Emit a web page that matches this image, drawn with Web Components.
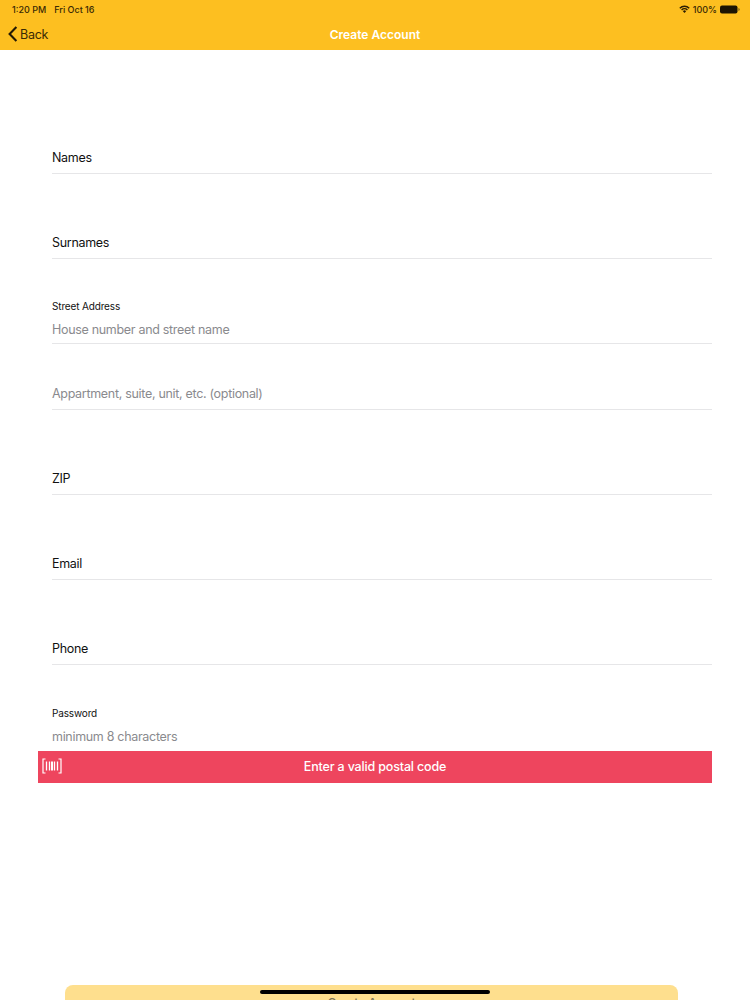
<!DOCTYPE html>
<html>
<head>
<meta charset="utf-8">
<title>Create Account</title>
<style>
  html, body { margin: 0; padding: 0; background: #fff; }
</style>
</head>
<body>
<app-screen>
  <nav-bar slot="top" heading="Create Account"></nav-bar>
  <form-field>Names</form-field>
  <form-field>Surnames</form-field>
  <form-field label="Street Address" hint>House number and street name</form-field>
  <form-field short hint>Appartment, suite, unit, etc. (optional)</form-field>
  <form-field>ZIP</form-field>
  <form-field>Email</form-field>
  <form-field>Phone</form-field>
  <form-field label="Password" hint noline>minimum 8 characters</form-field>
  <toast-bar slot="over">Enter a valid postal code</toast-bar>
  <submit-button slot="over">Create Account</submit-button>
  <home-bar slot="over"></home-bar>
</app-screen>

<script>
function makeTemplate(html) {
  const template = document.createElement('template');
  template.innerHTML = html;
  return template;
}

class AppScreen extends HTMLElement {
  constructor() {
    super();
    this.attachShadow({ mode: 'open' });
    this.shadowRoot.appendChild(AppScreen.template.content.cloneNode(true));
  }
}
AppScreen.template = makeTemplate(`
  <style>
    :host {
      display: flex;
      flex-direction: column;
      position: relative;
      width: 750px;
      height: 1000px;
      overflow: hidden;
      background: #fff;
      font-family: Inter, "Liberation Sans", sans-serif;
    }
    .form {
      display: flex;
      flex-direction: column;
      padding: 39px 38px 0 52px;
    }
  </style>
  <slot name="top"></slot>
  <div class="form"><slot></slot></div>
  <slot name="over"></slot>
`);

class NavBar extends HTMLElement {
  constructor() {
    super();
    this.attachShadow({ mode: 'open' });
    this.shadowRoot.appendChild(NavBar.template.content.cloneNode(true));
    this.shadowRoot.querySelector('.title').textContent = this.getAttribute('heading');
  }
}
NavBar.template = makeTemplate(`
  <style>
    :host {
      display: block;
      height: 50px;
      background: #fdbf20;
      color: #3a2a05;
    }
    .status {
      display: flex;
      justify-content: space-between;
      align-items: center;
      height: 18px;
      padding: 0 10px 0 12px;
      font-size: 9px;
      font-weight: 500;
    }
    .status .left { display: flex; gap: 8px; }
    .status .right { display: flex; align-items: center; gap: 3px; }
    .nav {
      display: grid;
      grid-template-columns: 1fr auto 1fr;
      align-items: center;
      height: 32px;
    }
    .back {
      display: flex;
      align-items: center;
      gap: 2px;
      padding-left: 8px;
      font-size: 12.5px;
      letter-spacing: -0.25px;
    }
    .title {
      color: #fff;
      font-size: 12px;
      font-weight: 600;
    }
  </style>
  <div class="status">
    <div class="left"><span>1:20 PM</span><span>Fri Oct 16</span></div>
    <div class="right">
      <svg width="11" height="8" viewBox="0 0 11 8">
        <path d="M0.3 2.7A7.4 7.4 0 0 1 10.7 2.7L9.7 3.8A6 6 0 0 0 1.3 3.8Z" fill="#2a1e04"/>
        <path d="M2.1 4.5A4.8 4.8 0 0 1 8.9 4.5L7.9 5.5A3.4 3.4 0 0 0 3.1 5.5Z" fill="#2a1e04"/>
        <path d="M3.9 6.2A2.2 2.2 0 0 1 7.1 6.2L5.5 7.9Z" fill="#2a1e04"/>
      </svg>
      <span>100%</span>
      <svg width="20" height="9" viewBox="0 0 20 9">
        <rect x="0" y="0.5" width="17.5" height="8" rx="2" fill="#1c1403"/>
        <path d="M18.5 3V6A1.6 1.6 0 0 0 18.5 3Z" fill="#6b5010"/>
      </svg>
    </div>
  </div>
  <div class="nav">
    <div class="back">
      <svg width="10" height="16" viewBox="0 0 10 16">
        <path d="M8.4 1L1.6 8L8.4 15" fill="none" stroke="#241a04" stroke-width="2.1"/>
      </svg>
      <span>Back</span>
    </div>
    <div class="title"></div>
    <div></div>
  </div>
`);

class FormField extends HTMLElement {
  constructor() {
    super();
    this.attachShadow({ mode: 'open' });
    this.shadowRoot.appendChild(FormField.template.content.cloneNode(true));
    const label = this.shadowRoot.querySelector('.label');
    if (this.hasAttribute('label')) {
      label.textContent = this.getAttribute('label');
    } else {
      label.remove();
    }
  }
}
FormField.template = makeTemplate(`
  <style>
    :host {
      display: flex;
      flex-direction: column;
      justify-content: flex-end;
      box-sizing: border-box;
      height: 85px;
      padding-bottom: 7px;
      border-bottom: 1px solid #e6e6e8;
      color: #111;
      font-size: 12.5px;
      letter-spacing: -0.31px;
      line-height: 17px;
    }
    :host([short]) { height: 66px; }
    :host([hint]) { color: #8a8a8e; }
    :host([label]) { padding-bottom: 5px; }
    :host([noline]) { padding-bottom: 4px; border-bottom-color: transparent; }
    .label {
      color: #111;
      font-size: 10px;
      letter-spacing: -0.15px;
      line-height: 14px;
      margin-bottom: 8px;
    }
  </style>
  <div class="label"></div>
  <div><slot></slot></div>
`);

class ToastBar extends HTMLElement {
  constructor() {
    super();
    this.attachShadow({ mode: 'open' });
    this.shadowRoot.appendChild(ToastBar.template.content.cloneNode(true));
  }
}
ToastBar.template = makeTemplate(`
  <style>
    :host {
      display: flex;
      align-items: center;
      justify-content: center;
      position: absolute;
      left: 38px;
      top: 751px;
      width: 674px;
      height: 32px;
      padding-bottom: 1px;
      box-sizing: border-box;
      background: #ee455e;
      color: #fff;
      font-size: 12.5px;
      font-weight: 500;
      letter-spacing: -0.16px;
    }
    svg { position: absolute; left: 4px; top: 7px; }
  </style>
  <svg width="20" height="16" viewBox="0 0 20 16" fill="none" stroke="#fff">
    <path d="M3.5 1H1V15H3.5M16.5 1H19V15H16.5" stroke-width="1.2"/>
    <path d="M4.5 3.5V12.5M7.5 3.5V12.5M12.5 3.5V12.5M15.5 3.5V12.5" stroke-width="1.3"/>
    <path d="M10 3.5V12.5" stroke-width="2"/>
  </svg>
  <slot></slot>
`);

class SubmitButton extends HTMLElement {
  constructor() {
    super();
    this.attachShadow({ mode: 'open' });
    this.shadowRoot.appendChild(SubmitButton.template.content.cloneNode(true));
  }
}
SubmitButton.template = makeTemplate(`
  <style>
    :host {
      display: flex;
      justify-content: center;
      position: absolute;
      left: 65px;
      top: 985px;
      width: 613px;
      height: 40px;
      padding-top: 10px;
      box-sizing: border-box;
      border-radius: 8px;
      background: #fedf8e;
      color: #7d7459;
      font-size: 12px;
      font-weight: 500;
      letter-spacing: -0.1px;
    }
  </style>
  <slot></slot>
`);

class HomeBar extends HTMLElement {
  constructor() {
    super();
    this.attachShadow({ mode: 'open' });
    this.shadowRoot.innerHTML = `
      <style>
        :host {
          display: block;
          position: absolute;
          left: 260px;
          top: 990px;
          width: 230px;
          height: 4px;
          border-radius: 2px;
          background: #000;
        }
      </style>
    `;
  }
}

customElements.define('app-screen', AppScreen);
customElements.define('nav-bar', NavBar);
customElements.define('form-field', FormField);
customElements.define('toast-bar', ToastBar);
customElements.define('submit-button', SubmitButton);
customElements.define('home-bar', HomeBar);
</script>
</body>
</html>
